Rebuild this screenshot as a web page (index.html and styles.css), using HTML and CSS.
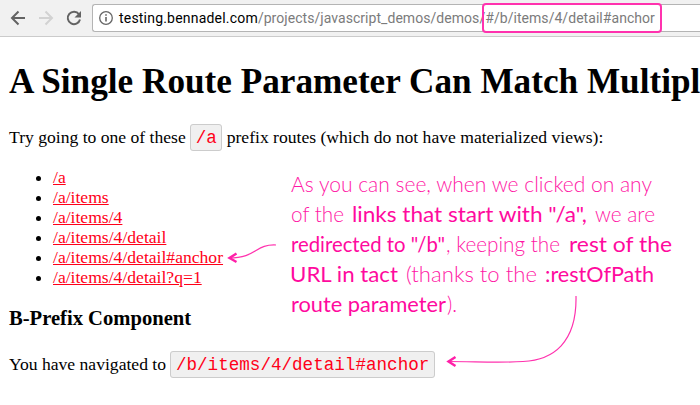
FILE: index.html
```html
<!DOCTYPE html>
<html lang="en">
<head>
<meta charset="utf-8">
<title>A Single Route Parameter Can Match Multiple</title>
<link rel="stylesheet" href="styles.css">
</head>
<body>
<header class="toolbar">
  <svg class="nav" width="92" height="36" viewBox="0 0 92 36" fill="none" stroke-width="2">
    <path class="active" d="M25 18H12.500M18.500 11.500L12 18l6.500 6.500"/>
    <path class="disabled" d="M39 18h12.500M45.500 11.500L52 18l-6.500 6.500"/>
    <path class="active" d="M79 14.300A6.200 6.200 0 1 0 80 19.500"/>
    <path class="fill" d="M81 11v6.500h-6.500z"/>
  </svg>
  <div class="address">
    <svg class="info" width="14" height="14" viewBox="0 0 14 14"><circle cx="7" cy="7" r="6.300" fill="none" stroke="#666" stroke-width="1.300"/><path d="M7 6v4.500M7 3.300v1.500" stroke="#666" stroke-width="1.600"/></svg>
    <span class="host">testing.bennadel.com</span><span class="path">/projects/javascript_demos/demos</span><span class="route">/#/b/items/4/detail#anchor</span>
  </div>
</header>
<main>
  <h1>A Single Route Parameter Can Match Multiple</h1>
  <p class="intro">Try going to one of these <code>/a</code> prefix routes (which do not have materialized views):</p>
  <ul>
    <li><a href="#/a">/a</a></li>
    <li><a href="#/a/items">/a/items</a></li>
    <li><a href="#/a/items/4">/a/items/4</a></li>
    <li><a href="#/a/items/4/detail">/a/items/4/detail</a></li>
    <li><a href="#/a/items/4/detail#anchor">/a/items/4/detail#anchor</a></li>
    <li><a href="#/a/items/4/detail?q=1">/a/items/4/detail?q=1</a></li>
  </ul>
  <h3>B-Prefix Component</h3>
  <p class="result">You have navigated to <code>/b/items/4/detail#anchor</code></p>
</main>
<svg class="notes" width="700" height="405" viewBox="0 0 700 405">
  <rect class="line box" x="483" y="4" width="178" height="28" rx="3"/>
  <g>
    <text x="291" y="192" textLength="361" lengthAdjust="spacingAndGlyphs">As you can see, when we clicked on any</text>
    <text x="291" y="222" textLength="53" lengthAdjust="spacingAndGlyphs">of the</text>
    <text class="strong" x="352" y="222" textLength="235" lengthAdjust="spacingAndGlyphs">links that start with "/a",</text>
    <text x="595" y="222" textLength="60" lengthAdjust="spacingAndGlyphs">we are</text>
    <text class="strong" x="291" y="252" textLength="154" lengthAdjust="spacingAndGlyphs">redirected to "/b"</text>
    <text x="446" y="252" textLength="114" lengthAdjust="spacingAndGlyphs">, keeping the</text>
    <text class="strong" x="569" y="252" textLength="103" lengthAdjust="spacingAndGlyphs">rest of the</text>
    <text class="strong" x="290" y="282" textLength="108" lengthAdjust="spacingAndGlyphs">URL in tact</text>
    <text x="406" y="282" textLength="131" lengthAdjust="spacingAndGlyphs">(thanks to the</text>
    <text class="strong" x="545" y="282" textLength="109" lengthAdjust="spacingAndGlyphs">:restOfPath</text>
    <text class="strong" x="291" y="312" textLength="155" lengthAdjust="spacingAndGlyphs">route parameter</text>
    <text x="447" y="312" textLength="10" lengthAdjust="spacingAndGlyphs">).</text>
  </g>
  <path class="line" d="M276 245C255 244 257 258 229 258"/>
  <path class="line head" d="M236.500 253.500L229.500 258l7 4"/>
  <path class="line" d="M576 296C577 343 553 360 523 361.500C500 363 475 361.500 448 361.500"/>
  <path class="line head" d="M455.500 357L448.500 361.500l7 4.500"/>
</svg>
</body>
</html>
```
FILE: styles.css
```css
html { overflow: hidden; }
body {
  margin: 0;
  width: 700px;
  height: 405px;
  overflow: hidden;
  background: #fff;
  color: #000;
  font-family: "Liberation Serif", serif;
  font-size: 17.6px;
  line-height: 20px;
}
.toolbar {
  display: flex;
  height: 36px;
  background: #f1f1f1;
  border-bottom: 1px solid #cbcbcb;
}
.nav { flex: none; }
.active { stroke: #636363; }
.disabled { stroke: #d2d2d2; }
.fill { fill: #636363; }
.address {
  display: flex;
  flex: 1;
  align-items: center;
  box-sizing: border-box;
  height: 28px;
  margin-top: 4px;
  padding-left: 6px;
  border: 1px solid #b4b4b4;
  border-right: 0;
  border-radius: 3px 0 0 3px;
  background: #fff;
  color: #7b7b7b;
  font: 14px/26px Roboto, sans-serif;
  letter-spacing: 0.05px;
  white-space: nowrap;
}
.info { margin-right: 6px; }
.host { color: #000; letter-spacing: 0.2px; }
main { padding: 0 9px; }
h1 {
  margin: 24px 0 0;
  font-size: 35.2px;
  line-height: 42px;
  white-space: nowrap;
}
p { margin: 0; white-space: nowrap; }
.intro { margin-top: 24px; }
code {
  padding: 3px 4.5px 2px;
  border: 1px solid #ccc;
  border-radius: 3px;
  background: #f0f0f0;
  color: #ff0018;
  font-family: "Liberation Mono", monospace;
  font-size: 17.6px;
}
ul { margin: 19px 0 0; padding-left: 44px; }
a { color: #ff0018; }
h3 { margin: 19px 0 0; font-size: 20.6px; line-height: 24px; }
.result { margin-top: 24px; }
.notes { position: absolute; left: 0; top: 0; pointer-events: none; }
.notes text {
  fill: #ff18a5;
  font: 300 21px Lato, sans-serif;
}
.notes .strong { fill: #ff0a9e; font-weight: 400; }
.line { fill: none; stroke: #ff32ae; stroke-width: 1.2; }
.box { stroke-width: 2; }
.head { stroke: #ff1fa8; stroke-width: 2.4; }
```
